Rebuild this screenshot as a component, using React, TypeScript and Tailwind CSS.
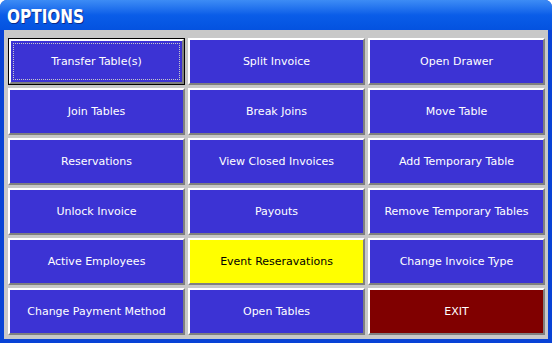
import React from "react";

type B = { label: string; kind?: "yellow" | "red"; focus?: boolean };

const buttons: B[] = [
  { label: "Transfer Table(s)", focus: true },
  { label: "Split Invoice" },
  { label: "Open Drawer" },
  { label: "Join Tables" },
  { label: "Break Joins" },
  { label: "Move Table" },
  { label: "Reservations" },
  { label: "View Closed Invoices" },
  { label: "Add Temporary Table" },
  { label: "Unlock Invoice" },
  { label: "Payouts" },
  { label: "Remove Temporary Tables" },
  { label: "Active Employees" },
  { label: "Event Reseravations", kind: "yellow" },
  { label: "Change Invoice Type" },
  { label: "Change Payment Method" },
  { label: "Open Tables" },
  { label: "EXIT", kind: "red" },
];

function Btn({ b }: { b: B }) {
  const bg =
    b.kind === "yellow"
      ? "bg-[#ffff00] text-black"
      : b.kind === "red"
      ? "bg-[#800000] text-white"
      : "bg-[#3c33d4] text-white";
  if (b.focus) {
    return (
      <div className="h-[47px] border border-black">
        <div className="h-full border-2 border-t-white border-l-white border-r-[#808080] border-b-[#808080]">
          <div className={`h-full ${bg} p-[2px]`}>
            <div className="h-full border border-dotted border-[#c8c8c8] flex items-center justify-center pt-[1px] text-[11px]">
              {b.label}
            </div>
          </div>
        </div>
      </div>
    );
  }
  return (
    <div className="h-[47px] border-2 border-t-white border-l-white border-r-[#808080] border-b-[#808080]">
      <div className={`h-full ${bg} flex items-center justify-center pt-[1px] text-[11px]`}>{b.label}</div>
    </div>
  );
}

export default function App() {
  return (
    <div
      className="w-[552px] h-[343px] bg-[#0842d6] rounded-t-[7px] overflow-hidden flex flex-col"
      style={{ fontFamily: "'DejaVu Sans', 'Liberation Sans', sans-serif" }}
    >
      <div className="h-[30px] shrink-0 bg-gradient-to-b from-[#3d8cf5] via-[#0a5de8] to-[#0452e0] flex items-center pl-[7px] pt-[1px]">
        <span
          className="inline-block text-white font-bold text-[20px] leading-none scale-x-[0.85] origin-left"
          style={{ fontFamily: "'Liberation Sans Narrow', 'DejaVu Sans Condensed', sans-serif", textShadow: "1px 1px 0 #0a2a8a" }}
        >
          OPTIONS
        </span>
      </div>
      <div className="flex-1 mx-[4px] mb-[4px] bg-[#c8c8c8] pt-[8px] pl-[4px] pr-[3px]">
        <div className="grid grid-cols-[177px_177px_177px] gap-[3px]">
          {buttons.map((b) => (
            <Btn key={b.label} b={b} />
          ))}
        </div>
      </div>
    </div>
  );
}
